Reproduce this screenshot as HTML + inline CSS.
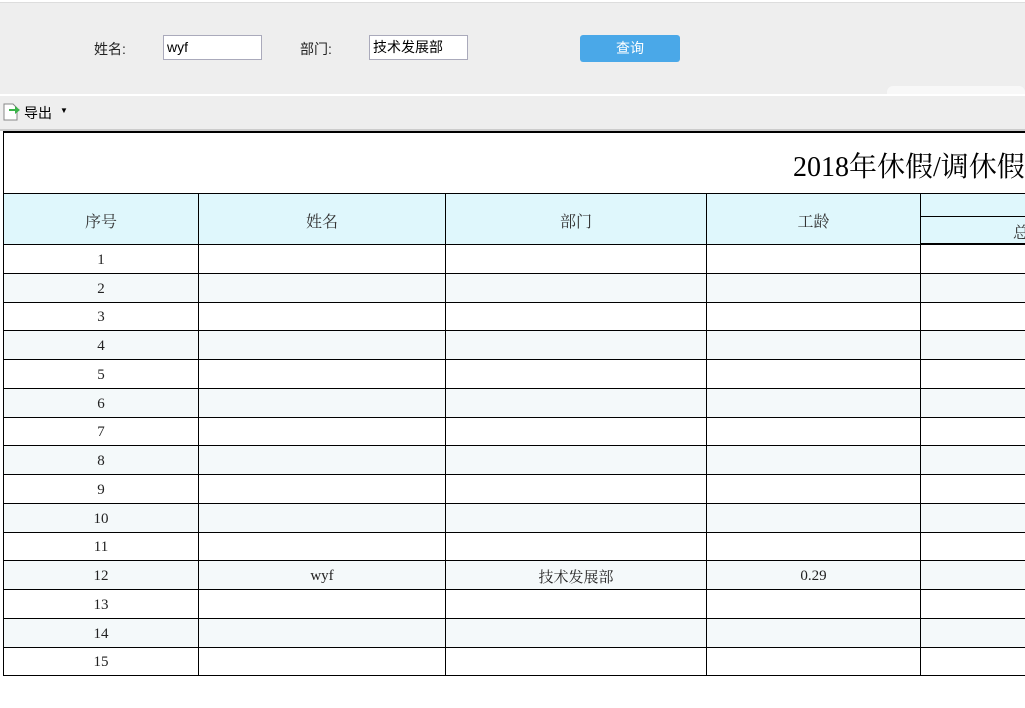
<!DOCTYPE html>
<html><head><meta charset="utf-8"><style>
body{margin:0;width:1025px;height:708px;overflow:hidden;background:#fff;font-family:"Liberation Sans","Noto Sans CJK SC",sans-serif;position:relative}
.top{position:absolute;left:0;top:2px;width:1025px;height:91px;background:#eeeeee;border-top:1px solid #ddd}
.lbl{position:absolute;font-size:14px;color:#222}
.inp{position:absolute;background:#fff;border:1px solid #aab;height:25px;box-sizing:border-box;font-size:14px;line-height:23px;padding-left:3px}
.btn{position:absolute;left:580px;top:32px;width:100px;height:27px;background:#4aa8e8;border-radius:3px;color:#fff;font-size:14px;text-align:center;line-height:27px}
.tb{position:absolute;left:0;top:96px;width:1025px;height:33px;background:#eeeeee;border-bottom:2px solid #ccc}
.wrap{position:absolute;left:3px;top:131px;width:1022px;height:560px;overflow:hidden}
table{border-collapse:collapse;font-family:"Liberation Serif","Noto Serif CJK SC",serif;table-layout:fixed;width:1037px}
td{border:1px solid #000;text-align:center;font-size:15px;color:#222;padding:0;padding-top:3px}
.h td{background:#dff7fc;font-size:16px;color:#333}
tr.r td{height:24.75px}
tr.r:nth-child(odd) td{background:#f4f9fa}
</style></head><body>
<div class="top">
<div class="lbl" style="left:94px;top:36px">姓名:</div>
<div class="inp" style="left:163px;top:32px;width:99px">wyf</div>
<div class="lbl" style="left:300px;top:36px">部门:</div>
<div class="inp" style="left:369px;top:32px;width:99px">技术发展部</div>
<div class="btn">查询</div>
<div style="position:absolute;left:887px;top:83px;width:138px;height:8px;background:#f8f8f8;border-radius:6px 6px 0 0"></div>
</div>
<div class="tb">
<svg style="position:absolute;left:3px;top:7px" width="20" height="18"><path d="M1 1h9l4 4v12H1z" fill="#fff" stroke="#888"/><path d="M6 6h6V3l5 4-5 4V8H6z" fill="#3bb34a"/></svg>
<span style="position:absolute;left:24px;top:7px;font-size:14px">导出</span>
<span style="position:absolute;left:60px;top:10px;font-size:8px">▼</span>
</div>
<div class="wrap">
<table>
<colgroup><col style="width:195px"><col style="width:247px"><col style="width:261px"><col style="width:214px"><col style="width:120px"></colgroup>
<tr><td colspan="5" style="height:57px;border-top:2px solid #000;text-align:left;font-size:28px;padding-left:789px;white-space:nowrap;overflow:hidden;border-right:none;color:#000">2018年休假/调休假</td></tr>
<tr class="h"><td rowspan="2" style="height:44px">序号</td><td rowspan="2">姓名</td><td rowspan="2">部门</td><td rowspan="2">工龄</td><td style="height:19px"></td></tr>
<tr class="h"><td style="height:20px;border-bottom:2px solid #000;text-align:left;padding-left:92px;overflow:hidden">总</td></tr>
<tr class="r"><td>1</td><td></td><td></td><td></td><td></td></tr>
<tr class="r"><td>2</td><td></td><td></td><td></td><td></td></tr>
<tr class="r"><td>3</td><td></td><td></td><td></td><td></td></tr>
<tr class="r"><td>4</td><td></td><td></td><td></td><td></td></tr>
<tr class="r"><td>5</td><td></td><td></td><td></td><td></td></tr>
<tr class="r"><td>6</td><td></td><td></td><td></td><td></td></tr>
<tr class="r"><td>7</td><td></td><td></td><td></td><td></td></tr>
<tr class="r"><td>8</td><td></td><td></td><td></td><td></td></tr>
<tr class="r"><td>9</td><td></td><td></td><td></td><td></td></tr>
<tr class="r"><td>10</td><td></td><td></td><td></td><td></td></tr>
<tr class="r"><td>11</td><td></td><td></td><td></td><td></td></tr>
<tr class="r"><td>12</td><td>wyf</td><td>技术发展部</td><td>0.29</td><td></td></tr>
<tr class="r"><td>13</td><td></td><td></td><td></td><td></td></tr>
<tr class="r"><td>14</td><td></td><td></td><td></td><td></td></tr>
<tr class="r"><td>15</td><td></td><td></td><td></td><td></td></tr>
</table>
</div>
</body></html>
